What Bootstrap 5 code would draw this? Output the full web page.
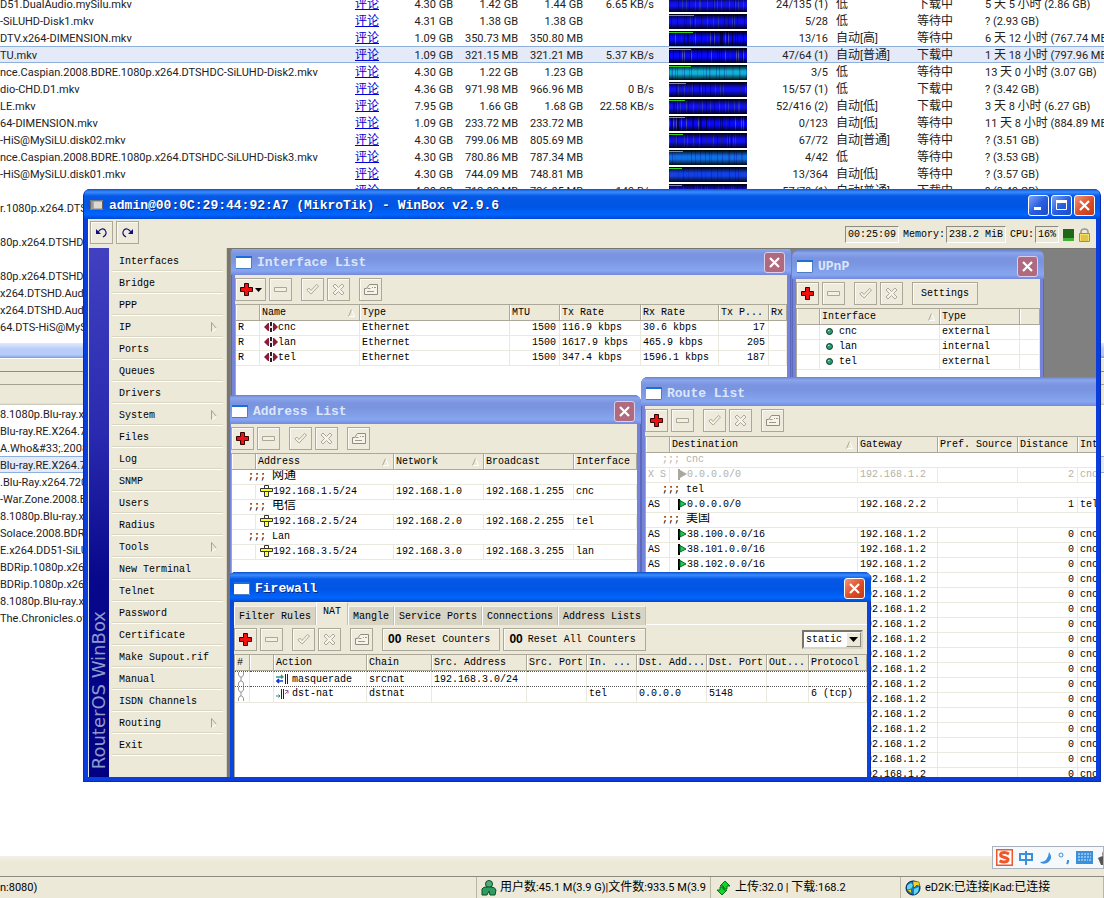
<!DOCTYPE html>
<html lang="zh-CN">
<head>
<meta charset="utf-8">
<meta name="viewport" content="width=device-width, initial-scale=1">
<title>WinBox</title>
<link href="https://cdn.jsdelivr.net/npm/bootstrap@5.3.0/dist/css/bootstrap.min.css" rel="stylesheet">
<style>
:root { --face: #ece9d8; --line: #aca899; --grid: #ebe9de; }
body { font-family: Roboto, "Noto Sans CJK SC", sans-serif; font-size: 11px; line-height: 17px; color: #000; background: #fff; overflow: hidden; }
table { border-collapse: separate; border-spacing: 0; table-layout: fixed; width: 100%; }
td, th { white-space: nowrap; overflow: hidden; padding: 0; }
.cjk { font-size: 12px; }
/* download manager behind */
.transfers { height: 343px; flex: none; margin-top: -5px; }
.transfers td { height: 17px; padding: 2px 4px 0; line-height: 15px; color: #222; }
.transfers td:first-child { padding-left: 0; }
.transfers .cjk { line-height: 0; }
.transfers a { color: #0000d8; font-size: 12px; line-height: 0; }
.transfers .chosen td, .queue .chosen { background: #e4eaf8; box-shadow: inset 0 1px #8fb0dc, inset 0 -1px #8fb0dc; }
.pieces { display: block; width: 78px; height: 15px; margin-left: 7px; }
.splitter { height: 15px; background: linear-gradient(#dfeaff, #b9cdf8 40%, #b4caf8 80%, #7d9bd8); }
.strip { height: 47px; background: linear-gradient(#fff 1px, var(--face) 1px 13px, #8f8c80 13px 14px, var(--face) 14px 26px, #a5a294 26px 27px, var(--face) 27px 45px, #c5c2b4); }
.queue > div { height: 17px; padding-top: 2px; line-height: 15px; white-space: nowrap; color: #222; }
.dock { height: 21px; background: linear-gradient(#f2f0e4, var(--face) 6px); border-bottom: 1px solid #8d8b80; }
.statusbar { height: 21px; background: var(--face); }
.statusbar > div { box-shadow: inset -1px 0 #b9b6a5; padding-left: 4px; white-space: nowrap; overflow: hidden; gap: 3px; }
.ime { right: 0; bottom: 29px; width: 112px; height: 23px; border: 1px solid #a9b3bd; background: #f6f9fc; padding-left: 3px; gap: 5px; overflow: hidden; }
/* shared WinBox look */
.winbox, .winbox button, .winbox select { font-family: "Liberation Mono", "Noto Sans CJK SC", monospace; font-size: 10px; line-height: 15px; color: #000; }
.winbox { left: 83px; right: 3px; top: 189px; bottom: 116px; background: #0a3ddb; padding: 0 4px 4px; border-radius: 7px 7px 0 0; overflow: hidden; border: 1px solid #0a2cb4; border-top: 0; }
.bar-title { background: linear-gradient(#0a4fc8, #3a8cff 3px, #0658e6 7px, #0055e5 60%, #0066ff 85%, #0048d0); color: #fff; font-size: 13px; font-weight: bold; white-space: nowrap; text-shadow: 1px 1px #0a2a80; }
.winbox > .bar-title { height: 30px; margin: 0 -4px; padding: 2px 5px 0 6px; gap: 6px; }
.winbox .cap { width: 21px; height: 21px; padding: 0; border: 1px solid #fff; border-radius: 3px; background: linear-gradient(135deg, #7fa4f5, #2a5fe0 50%, #1c4cc8); display: flex; align-items: center; justify-content: center; flex: none; }
.winbox .cap.shut { background: linear-gradient(135deg, #f0957c, #dd4c26 55%, #c23a14); }
.mainbar { height: 29px; background: var(--face); padding: 2px 5px 0 1px; border-left: 1px solid #fff; }
.winbox .tool { width: 23px; height: 23px; padding: 0; background: #eeebdc; border: 1px solid #aca899; box-shadow: inset 1px 1px #fbfaf4; display: flex; align-items: center; justify-content: center; flex: none; }
.winbox .tool.wide { width: auto; padding: 0 9px 0 5px; gap: 5px; white-space: nowrap; }
.winbox .tool.plus-menu { width: 31px; }
.sunk { border: 1px solid; border-color: #8d8b80 #fff #fff #8d8b80; height: 17px; padding: 0 2px; }
.brand { width: 20px; background: linear-gradient(#4040c0, #2a2ab0 35%, #08088c 62%, #000080); }
.brand span { writing-mode: vertical-rl; transform: rotate(180deg); color: #8d9bc9; font: 18px/20px "DejaVu Sans", sans-serif; white-space: nowrap; margin-bottom: 8px; }
.menu { width: 118px; background: var(--face); padding-top: 2px; border-right: 1px solid #d5d2c2; }
.menu .list-group-item { height: 22px; border: 0; border-radius: 0; margin: 0 3px; width: auto; padding: 0 6px 0 7px; background: transparent; box-shadow: inset 0 -1px #fff, inset 0 -2px #d8d5c5; }
.desk { background: #808080; border-left: 3px solid #77776f; overflow: hidden; border-top: 1px solid #77776f; }
.child { background: #7584d8; padding: 0 4px; border-radius: 7px 7px 0 0; bottom: 0; overflow: hidden; box-shadow: inset 1px 0 #5a68bd, inset -1px 0 #5a68bd; }
.child .bar-title { height: 29px; margin: 0 -4px; padding: 3px 6px 0 5px; gap: 5px; background: linear-gradient(#6a82d0, #8aa6ec 3px, #7a94e0 8px, #7a94e0 45%, #86a6f0 85%, #7488dd); color: #dbe6fb; text-shadow: none; }
.child .cap { background: #b06a80; border-color: #dccdea; }
.child.front { background: #0a46dc; padding-left: 5px; box-shadow: inset 1px 0 #0a2cb4, inset -1px 0 #0a2cb4; }
.child.front .bar-title { height: 30px; margin-left: -5px; background: linear-gradient(#0a4fc8, #3a8cff 3px, #0658e6 7px, #0055e5 60%, #0066ff 85%, #0048d0); color: #fff; text-shadow: 1px 1px #0a2a80; }
.child.front .cap { border-color: #fff; }
.child.front td svg { margin-right: 3px; }
.tools { height: 29px; background: var(--face); padding-top: 3px; gap: 3px; }
.route .tools { height: 30px; }
.tools .gap-before { margin-left: 6px; }
.counter-mark { font: bold 12px/15px "Liberation Sans", sans-serif; }
.sheet { background: #fff; flex: 1; overflow: hidden; border-left: 1px solid #aca899; }
.sheet th { height: 17px; line-height: 14px; font-weight: normal; background: var(--face); padding: 0 2px; border: solid #aca899; border-width: 1px 1px 1px 0; position: relative; box-shadow: inset 1px 0 #fff; }
.sheet td { height: 15px; line-height: 14px; padding: 0 2px; border-right: 1px solid var(--grid); border-bottom: 1px solid var(--grid); }
.sheet .cjk { line-height: 0; }
.sheet .num { text-align: right; padding-right: 3px; }
.sheet .off { color: #b4b2a8; }
.sheet td.note { padding-left: 16px; border-right: 0; }
.sheet th svg { position: absolute; right: 4px; top: 4px; }
.sheet td svg { vertical-align: middle; }
.sheet .current td { border-top: 1px dotted #555; border-bottom: 1px dotted #555; line-height: 13px; }
.iface { left: 1px; top: -3px; width: 560px; }
.upnp { left: 562px; top: 1px; width: 252px; }
.addr { left: -3px; top: 146px; width: 414px; }
.route { left: 411px; top: 128px; right: -8px; }
.fire { left: -1px; top: 323px; width: 642px; }
.tabs { background: var(--face); height: 23px; box-shadow: inset 0 -1px #fff; }
.winbox .tabs button { height: 19px; border: 0; border-left: 1px solid #fff; border-top: 1px solid #f6f4ea; border-right: 1px solid #c2bfae; background: #d7d4c3; padding: 0 4px; white-space: nowrap; }
.winbox .tabs button.on { height: 23px; background: var(--face); padding: 0 6px 5px; }
.winbox .chooser { width: 61px; height: 19px; padding: 0 2px; border: 2px solid; border-color: #77756a #d8d5c5 #d8d5c5 #77756a; border-radius: 0; background: #fff; appearance: none; line-height: 14px; }
.chooser-wrap { height: 19px; margin-top: 2px; }
.chooser-wrap span { right: 2px; top: 2px; width: 15px; height: 15px; background: var(--face); border: 1px solid; border-color: #fff #8d8b80 #8d8b80 #fff; pointer-events: none; }
</style>
</head>
<body class="position-relative vh-100">
<svg class="d-none">
  <symbol id="i-plus" viewBox="0 0 13 13"><path d="M4.500.500h4v4h4v4h-4v4h-4v-4h-4v-4h4z" fill="#f01010" stroke="#300"/></symbol>
  <symbol id="i-minus" viewBox="0 0 13 13"><path d="M.500 4.500h12v4H.500z" fill="#f3f0e2" stroke="#aca899"/></symbol>
  <symbol id="i-check" viewBox="0 0 13 13"><path d="M.800 7l2-2L5 7.500 10.500 1.500l2 1.500L5.200 11z" fill="#f6f4e8" stroke="#aca899"/></symbol>
  <symbol id="i-cross" viewBox="0 0 13 13"><path d="M1 3l2-2 3.500 3.500L10 1l2 2-3.500 3.500L12 10l-2 2-3.500-3.500L3 12l-2-2 3.500-3.500z" fill="#f6f4e8" stroke="#aca899"/></symbol>
  <symbol id="i-card" viewBox="0 0 14 13"><path d="M.500 5.500h2l3-4h8v10H.500z" fill="#f6f4e8" stroke="#8f8c80"/><path d="M3.500 5.500h3M3 8.500h7M8 4.500h1M10 4.500h2" fill="none" stroke="#9c998c"/></symbol>
  <symbol id="i-sort" viewBox="0 0 7 8"><path d="M.500 7.500h6L3.500.500" fill="none" stroke="#fff"/><path d="M.500 7.500L3.500.500" stroke="#aca899"/></symbol>
  <symbol id="i-eth" viewBox="0 0 14 10"><path d="M0 5l4-4h1v8H4zM14 5l-4-4H9v8h1z" fill="#8a1c38"/><path d="M7 0v4M7 6v4" stroke="#222" stroke-width="2"/><path d="M5 5h4" stroke="#d8c8cc"/></symbol>
  <symbol id="i-addr" viewBox="0 0 13 12"><path d="M4.500 6.500h4v5h-4z" fill="#ffff40" stroke="#333"/><path d="M4.500 3.500V.500h4v3" fill="#fff" stroke="#333"/><path d="M.500 3.500h12v3H.500z" fill="#ffff20" stroke="#333"/></symbol>
  <symbol id="i-flag" viewBox="0 0 9 11"><path d="M1 0v11" stroke="#000" stroke-width="2"/><path d="M2 1.500L8 5 2 8z" fill="#20d040" stroke="#063"/></symbol>
  <symbol id="i-flagoff" viewBox="0 0 9 11"><path d="M1 0v11" stroke="#aaa89c" stroke-width="2"/><path d="M2 1L9 5 2 9z" fill="#aaa89c"/></symbol>
  <symbol id="i-dot" viewBox="0 0 7 7"><circle cx="3.500" cy="3.500" r="3" fill="#2f9c72" stroke="#063a28"/><path d="M2 2.500h1.500" stroke="#b8f0d8"/></symbol>
  <symbol id="i-masq" viewBox="0 0 13 12"><path d="M0 4h7M5 2l2 2-2 1.500" stroke="#2c9c84" fill="none" stroke-width="1.300"/><path d="M7 8H1M3 6L1 8l2 2" stroke="#1038d0" fill="none" stroke-width="1.600"/><path d="M9.500 1v10M11.500 1v10" stroke="#222"/></symbol>
  <symbol id="i-dst" viewBox="0 0 13 12"><path d="M0 8h4M2.500 6.500L4 8 2.500 9.500" stroke="#2c8c74" fill="none"/><path d="M5.500 1v10M7.500 1v10" stroke="#222"/><path d="M9 6l3-3M9 2.500h3v3" stroke="#9060a0" fill="none"/></symbol>
  <symbol id="i-chain" viewBox="0 0 8 14"><path d="M1.500 0v3L3 5h2l1.500-2V0M1.500 14v-3L3 9h2l1.500 2v3M4 5v4" fill="none" stroke="#999"/></symbol>
  <symbol id="i-win" viewBox="0 0 16 13"><path d="M0 0h16v13H0z" fill="#fff"/><path d="M0 0h16v2H0z" fill="#1a70d8"/><path d="M15.500 2v10.500H0" fill="none" stroke="#4c7cc4"/></symbol>
  <symbol id="i-x" viewBox="0 0 11 11"><path d="M1 1l9 9M10 1l-9 9" stroke="#fff" stroke-width="2.200"/></symbol>
  <symbol id="i-sub" viewBox="0 0 6 10"><path d="M.500 9.500V.500l5 6" fill="none" stroke="#a5a294"/><path d="M1 9.500l4.500-3" stroke="#fff"/></symbol>
</svg>

<main class="d-flex flex-column h-100 overflow-hidden">
  <div class="transfers overflow-hidden">
    <table>
      <colgroup><col style="width:343px"><col style="width:40px"><col style="width:74px"><col style="width:65px"><col style="width:65px"><col style="width:71px"><col style="width:99px"><col style="width:75px"><col style="width:81px"><col style="width:68px"><col></colgroup>
      <tbody id="transfers"></tbody>
    </table>
  </div>
  <div style="height:5px"></div>
  <div class="splitter flex-shrink-0"></div>
  <div class="strip flex-shrink-0"></div>
  <div class="queue flex-grow-1 overflow-hidden">
    <div>8.1080p.Blu-ray.x264</div><div>Blu-ray.RE.X264.720p</div><div>A.Who&amp;#33;.2008.BD</div><div class="chosen">Blu-ray.RE.X264.720p</div><div>.Blu-Ray.x264.720p</div><div>-War.Zone.2008.BD</div><div>8.1080p.Blu-ray.x264</div><div>Solace.2008.BDRip</div><div>E.x264.DD51-SiLUHD</div><div>BDRip.1080p.x264</div><div>BDRip.1080p.x264</div><div>8.1080p.Blu-ray.x264</div><div>The.Chronicles.of.Narnia</div>
  </div>
  <div class="dock flex-shrink-0"></div>
  <footer class="statusbar d-flex flex-shrink-0">
    <div style="width:477px" class="d-flex align-items-center ps-0">n:8080)</div>
    <div style="width:234px" class="d-flex align-items-center">
      <svg class="flex-shrink-0" width="16" height="16" viewBox="0 0 16 16"><circle cx="8" cy="4" r="3.500" fill="#4fae78" stroke="#0c4a2a"/><path d="M1 9q1-2 4-2h5q4 0 5 3l-1 5H9l-1-4-2 4H1z" fill="#2f9c60" stroke="#0c4a2a"/></svg>
      <span><span class="cjk">用户数</span>:45.1 M(3.9 G)|<span class="cjk">文件数</span>:933.5 M(3.9</span></div>
    <div style="width:190px" class="d-flex align-items-center">
      <svg class="flex-shrink-0" width="17" height="16" viewBox="0 0 17 16"><path d="M10 1l5 5h-3v3H8V6H5zM7 15l-5-5h3V7h4v3h3z" fill="#10d828" stroke="#087018"/></svg>
      <span><span class="cjk">上传</span>:32.0 | <span class="cjk">下载</span>:168.2</span></div>
    <div class="d-flex align-items-center flex-grow-1">
      <svg class="flex-shrink-0" width="17" height="16" viewBox="0 0 17 16"><circle cx="8" cy="8" r="7" fill="#1878c0" stroke="#031c40"/><path d="M2 6q4-5 6-1l-2 4-4 1zM9 9l5-2-1 5-4 3z" fill="#60d8f0"/><path d="M8 1l6 1 1 5-3-2-3 3-1-4zM2 10l4-1 1 5z" fill="#f0d820" stroke="#222" stroke-width=".500"/></svg>
      <span>eD2K:<span class="cjk">已连接</span>|Kad:<span class="cjk">已连接</span></span></div>
  </footer>
</main>

<aside class="ime position-absolute d-flex align-items-center">
  <svg class="flex-shrink-0" width="17" height="17" viewBox="0 0 17 17"><path d="M0 0h17v17H0z" fill="#f0562a"/><path d="M1.500 1.500h14v14h-14z" fill="#fff"/><path d="M13 5Q9 2.500 5.500 4 2.500 7 8 8.300q6 1.200 3 4-3 1.500-7.500-.500" fill="none" stroke="#f0562a" stroke-width="3"/></svg>
  <svg class="flex-shrink-0" width="16" height="16" viewBox="0 0 16 16"><path d="M2 4h12v6H2zM8 1v14" fill="none" stroke="#3a90dc" stroke-width="2"/></svg>
  <svg class="flex-shrink-0" width="14" height="14" viewBox="0 0 14 14"><path d="M10 1q5 7-2 11-5 2-7-1 8 0 9-10z" fill="#3a90dc"/></svg>
  <svg class="flex-shrink-0" width="13" height="14" viewBox="0 0 13 14"><circle cx="3" cy="4" r="2" fill="none" stroke="#3a90dc"/><path d="M10 9v2l-1 2" fill="none" stroke="#3a90dc" stroke-width="2"/></svg>
  <svg class="flex-shrink-0" width="17" height="15" viewBox="0 0 17 15"><path d="M0 1h17v13H0z" fill="#3a90dc"/><path d="M2 4h13M2 7h13M2 10h2M5 10h7M13 10h2" stroke="#dcecfa" stroke-dasharray="2 1"/></svg>
  <svg class="flex-shrink-0" width="14" height="16" viewBox="0 0 14 16"><circle cx="7" cy="4" r="3" fill="#888"/><path d="M0 8q6-4 12 0v4l-2 3H3z" fill="#555"/></svg>
</aside>

<section class="winbox position-absolute d-flex flex-column">
  <header class="bar-title d-flex align-items-center">
    <svg width="13" height="10" viewBox="0 0 14 10"><path d="M0 0h14v10H0z" fill="#dcdad0"/><path d="M.500.500h13v9H.500z" fill="none" stroke="#555"/><path d="M1 1h3v8H1z" fill="#999"/></svg>
    <span>admin@00:0C:29:44:92:A7 (MikroTik) - WinBox v2.9.6</span>
    <div class="ms-auto d-flex" style="gap:2px">
      <button class="cap" aria-label="Minimize"><svg width="11" height="11"><path d="M1 7h7v3H1z" fill="#fff"/></svg></button>
      <button class="cap" aria-label="Maximize"><svg width="11" height="11"><path d="M.500 1.500h10v8H.500z" fill="none" stroke="#fff"/><path d="M0 0h11v3H0z" fill="#fff"/></svg></button>
      <button class="cap shut" aria-label="Close"><svg width="11" height="11"><use href="#i-x"/></svg></button>
    </div>
  </header>
  <div class="mainbar d-flex">
    <button class="tool" aria-label="Undo"><svg width="13" height="12" viewBox="0 0 13 12"><path d="M3 5q4-5 7-2 3 4-2 7" fill="none" stroke="#10107c" stroke-width="1.200"/><path d="M1 2v5h5z" fill="#10107c"/></svg></button>
    <button class="tool" style="margin-left:3px" aria-label="Redo"><svg width="13" height="12" viewBox="0 0 13 12"><path d="M10 5Q6 0 3 3q-3 4 2 7" fill="none" stroke="#10107c" stroke-width="1.200"/><path d="M12 2v5H7z" fill="#10107c"/></svg></button>
    <div class="ms-auto d-flex align-items-center" style="gap:4px">
      <span class="sunk">00:25:09</span><span>Memory:</span><span class="sunk" style="margin-left:-3px">238.2 MiB</span><span>CPU:</span><span class="sunk" style="margin-left:-3px">16%</span>
      <svg width="11" height="12"><path d="M0 0h11v9H0z" fill="#206818"/><path d="M0 9h11v3H0z" fill="#40b038"/></svg>
      <svg width="13" height="14" viewBox="0 0 13 14"><path d="M3 6V4q0-3 3.500-3T10 4v2" fill="none" stroke="#999" stroke-width="1.500"/><path d="M1.500 5.500h10v8h-10z" fill="#f8e060" stroke="#a89038"/><path d="M3 8h7M3 10h7M3 12h7" stroke="#c8a840"/></svg>
    </div>
  </div>
  <div class="d-flex flex-grow-1 overflow-hidden" style="border-left:1px solid #dfe6f5">
    <div class="brand d-flex align-items-end flex-shrink-0"><span>RouterOS WinBox</span></div>
    <nav class="menu list-group rounded-0 flex-shrink-0" id="menu"></nav>
    <div class="desk position-relative flex-grow-1">

      <section class="child upnp position-absolute d-flex flex-column">
        <div class="bar-title d-flex align-items-center"><svg width="16" height="13"><use href="#i-win"/></svg><span>UPnP</span><button class="cap ms-auto" aria-label="Close"><svg width="11" height="11"><use href="#i-x"/></svg></button></div>
        <div class="tools d-flex" data-tools="nocard"><button class="tool wide gap-before order-last px-2">Settings</button></div>
        <div class="sheet"><table><colgroup><col style="width:23px"><col style="width:120px"><col style="width:80px"><col></colgroup>
          <thead><tr><th></th><th>Interface<svg width="7" height="8"><use href="#i-sort"/></svg></th><th>Type</th><th></th></tr></thead>
          <tbody id="upnp"></tbody></table></div>
      </section>

      <section class="child iface position-absolute d-flex flex-column">
        <div class="bar-title d-flex align-items-center"><svg width="16" height="13"><use href="#i-win"/></svg><span>Interface List</span><button class="cap ms-auto" aria-label="Close"><svg width="11" height="11"><use href="#i-x"/></svg></button></div>
        <div class="tools d-flex" data-tools="menu"></div>
        <div class="sheet"><table><colgroup><col style="width:24px"><col style="width:100px"><col style="width:150px"><col style="width:50px"><col style="width:81px"><col style="width:78px"><col style="width:50px"><col></colgroup>
          <thead><tr><th></th><th>Name<svg width="7" height="8"><use href="#i-sort"/></svg></th><th>Type</th><th>MTU</th><th>Tx Rate</th><th>Rx Rate</th><th>Tx P...</th><th>Rx</th></tr></thead>
          <tbody id="iface"></tbody></table></div>
      </section>

      <section class="child addr position-absolute d-flex flex-column">
        <div class="bar-title d-flex align-items-center"><svg width="16" height="13"><use href="#i-win"/></svg><span>Address List</span><button class="cap ms-auto" aria-label="Close"><svg width="11" height="11"><use href="#i-x"/></svg></button></div>
        <div class="tools d-flex" data-tools="full"></div>
        <div class="sheet"><table><colgroup><col style="width:24px"><col style="width:138px"><col style="width:90px"><col style="width:90px"><col></colgroup>
          <thead><tr><th></th><th>Address<svg width="7" height="8"><use href="#i-sort"/></svg></th><th>Network<svg width="7" height="8"><use href="#i-sort"/></svg></th><th>Broadcast</th><th>Interface</th></tr></thead>
          <tbody id="addr"></tbody></table></div>
      </section>

      <section class="child route position-absolute d-flex flex-column">
        <div class="bar-title d-flex align-items-center"><svg width="16" height="13"><use href="#i-win"/></svg><span>Route List</span></div>
        <div class="tools d-flex" data-tools="full"></div>
        <div class="sheet"><table><colgroup><col style="width:24px"><col style="width:188px"><col style="width:80px"><col style="width:80px"><col style="width:60px"><col></colgroup>
          <thead><tr><th></th><th>Destination<svg width="7" height="8"><use href="#i-sort"/></svg></th><th>Gateway</th><th>Pref. Source</th><th>Distance</th><th>Interface</th></tr></thead>
          <tbody id="route"></tbody></table></div>
      </section>

      <section class="child front fire position-absolute d-flex flex-column">
        <div class="bar-title d-flex align-items-center"><svg width="16" height="13"><use href="#i-win"/></svg><span>Firewall</span><button class="cap shut ms-auto" aria-label="Close"><svg width="11" height="11"><use href="#i-x"/></svg></button></div>
        <div class="tabs d-flex align-items-end"><button>Filter Rules</button><button class="on">NAT</button><button>Mangle</button><button>Service Ports</button><button>Connections</button><button>Address Lists</button></div>
        <div class="tools d-flex pe-1" data-tools="full"><div class="d-flex order-last flex-grow-1 gap-before" style="gap:3px"><button class="tool wide"><b class="counter-mark">00</b>Reset Counters</button><button class="tool wide"><b class="counter-mark">00</b>Reset All Counters</button>
          <div class="chooser-wrap position-relative ms-auto"><select class="chooser" aria-label="Filter"><option>static</option></select><span class="position-absolute d-flex align-items-center justify-content-center"><svg width="9" height="5"><path d="M0 0h9L4.500 5z"/></svg></span></div></div></div>
        <div class="sheet"><table><colgroup><col style="width:15px"><col style="width:24px"><col style="width:93px"><col style="width:65px"><col style="width:95px"><col style="width:60px"><col style="width:50px"><col style="width:70px"><col style="width:60px"><col style="width:42px"><col></colgroup>
          <thead><tr><th>#</th><th></th><th>Action</th><th>Chain</th><th>Src. Address</th><th>Src. Port</th><th>In. ...</th><th>Dst. Add...</th><th>Dst. Port</th><th>Out...</th><th>Protocol</th></tr></thead>
          <tbody id="nat"></tbody></table></div>
      </section>
    </div>
  </div>
</section>

<script src="https://cdn.jsdelivr.net/npm/bootstrap@5.3.0/dist/js/bootstrap.bundle.min.js"></script>
<script>
const el = id => document.getElementById(id);
const icon = (name, w, h) => `<svg width="${w}" height="${h}"><use href="#i-${name}"/></svg>`;
const cjk = s => s.replace(/[\u4e00-\u9fff]+/g, m => `<span class="cjk">${m}</span>`);

// Piece map of one download: base hue, stripe tints, finished share
function pieces(seed, tone, done) {
  const base = { blue: '#1010f0', teal: '#10b0d8', azure: '#1070e8', navy: '#1040e8', dark: '#0808ff' }[tone];
  let s = seed * 7919, out = '';
  const rnd = () => (s = (s * 16807 + 11) % 2147483647) / 2147483647;
  const tints = tone === 'dark' ? ['#000', '#777a90', '#000060', '#2020c0'] : ['#202090', '#4050a0', '#0000b0'];
  const alpha = ['teal', 'azure', 'navy'].includes(tone) ? .3 : .6;
  for (let x = 0; x < 78; x += 1 + Math.floor(rnd() * 6))
    out += `<rect x="${x}" width="1" height="15" fill="${tints[Math.floor(rnd() * tints.length)]}" opacity="${alpha}"/>`;
  return `<svg class="pieces" viewBox="0 0 78 15" shape-rendering="crispEdges"><defs><linearGradient id="g${seed}" x2="0" y2="1"><stop offset="0"/><stop offset=".4" stop-opacity="0"/><stop offset=".6" stop-opacity="0"/><stop offset="1" stop-opacity=".9"/></linearGradient></defs><rect width="78" height="15" fill="${base}"/>${out}<rect width="78" height="15" fill="url(#g${seed})"/><rect y="1" width="${done}" height="1" fill="#30d020"/></svg>`;
}
const jobs = [
  ['D51.DualAudio.mySilu.mkv','4.30 GB','1.42 GB','1.44 GB','6.65 KB/s','blue',26,'24/135 (1)','低','下载中','5 天 5 小时 (2.86 GB)'],
  ['-SiLUHD-Disk1.mkv','4.31 GB','1.38 GB','1.38 GB','','blue',25,'5/28','低','等待中','? (2.93 GB)'],
  ['DTV.x264-DIMENSION.mkv','1.09 GB','350.73 MB','350.80 MB','','dark',24,'13/16','自动[高]','等待中','6 天 12 小时 (767.74 MB)'],
  ['TU.mkv','1.09 GB','321.15 MB','321.21 MB','5.37 KB/s','dark',22,'47/64 (1)','自动[普通]','下载中','1 天 18 小时 (797.96 MB)'],
  ['nce.Caspian.2008.BDRE.1080p.x264.DTSHDC-SiLUHD-Disk2.mkv','4.30 GB','1.22 GB','1.23 GB','','teal',22,'3/5','低','等待中','13 天 0 小时 (3.07 GB)'],
  ['dio-CHD.D1.mkv','4.36 GB','971.98 MB','966.96 MB','0 B/s','blue',17,'15/57 (1)','低','下载中','? (3.42 GB)'],
  ['LE.mkv','7.95 GB','1.66 GB','1.68 GB','22.58 KB/s','blue',16,'52/416 (2)','自动[低]','下载中','3 天 8 小时 (6.27 GB)'],
  ['64-DIMENSION.mkv','1.09 GB','233.72 MB','233.72 MB','','dark',16,'0/123','自动[低]','等待中','11 天 8 小时 (884.89 MB)'],
  ['-HiS@MySiLU.disk02.mkv','4.30 GB','799.06 MB','805.69 MB','','blue',14,'67/72','自动[普通]','等待中','? (3.51 GB)'],
  ['nce.Caspian.2008.BDRE.1080p.x264.DTSHDC-SiLUHD-Disk3.mkv','4.30 GB','780.86 MB','787.34 MB','','azure',14,'4/42','低','等待中','? (3.53 GB)'],
  ['-HiS@MySiLU.disk01.mkv','4.30 GB','744.09 MB','748.81 MB','','navy',13,'13/364','自动[低]','等待中','? (3.57 GB)'],
  ['','4.30 GB','713.03 MB','736.05 MB','149 B/s','blue',13,'57/79 (1)','自动[普通]','下载中','? (3.49 GB)']
];
el('transfers').innerHTML = jobs.map((j, i) => `<tr class="${i === 3 ? 'chosen' : ''}"><td>${j[0]}</td><td class="text-end"><a href="#">评论</a></td>${j.slice(1, 5).map(v => `<td class="text-end">${v}</td>`).join('')}<td>${pieces(i + 1, j[5], j[6])}</td><td class="text-end">${j[7]}</td><td>${cjk(j[8])}</td><td>${cjk(j[9])}</td><td>${cjk(j[10])}</td></tr>`).join('')
  + ['r.1080p.x264.DTSHD','','80p.x264.DTSHD.Audio','','80p.x264.DTSHD.Audio','x264.DTSHD.Audio','x264.DTSHD.Audio','64.DTS-HiS@MySiLU'].map(n => `<tr><td>${n}</td><td colspan="10"></td></tr>`).join('');

el('menu').innerHTML = ['Interfaces','Bridge','PPP','IP>','Ports','Queues','Drivers','System>','Files','Log','SNMP','Users','Radius','Tools>','New Terminal','Telnet','Password','Certificate','Make Supout.rif','Manual','ISDN Channels','Routing>','Exit']
  .map(t => `<button class="list-group-item list-group-item-action d-flex align-items-center justify-content-between"><span>${t.replace('>', '')}</span>${t.endsWith('>') ? icon('sub', 6, 10) : ''}</button>`).join('');

document.querySelectorAll('[data-tools]').forEach(bar => {
  const kind = bar.dataset.tools;
  const b = (label, pic, cls = '') => `<button class="tool ${cls}" aria-label="${label}">${pic}</button>`;
  bar.insertAdjacentHTML('afterbegin',
    b('Add', icon('plus', 13, 13) + (kind === 'menu' ? '<svg width="7" height="4" style="margin-left:2px"><path d="M0 0h7L3.500 4z"/></svg>' : ''), kind === 'menu' ? 'plus-menu' : '')
    + b('Remove', icon('minus', 13, 13)) + b('Enable', icon('check', 13, 13), 'gap-before') + b('Disable', icon('cross', 13, 13))
    + (kind === 'nocard' ? '' : b('Comment', icon('card', 14, 13), 'gap-before')));
});

el('iface').innerHTML = [['cnc','116.9 kbps','30.6 kbps','17'],['lan','1617.9 kbps','465.9 kbps','205'],['tel','347.4 kbps','1596.1 kbps','187']]
  .map(r => `<tr><td>R</td><td class="ps-1">${icon('eth', 14, 10)}${r[0]}</td><td>Ethernet</td><td class="num">1500</td><td>${r[1]}</td><td>${r[2]}</td><td class="num">${r[3]}</td><td></td></tr>`).join('');
el('upnp').innerHTML = [['cnc','external'],['lan','internal'],['tel','external']]
  .map(r => `<tr><td></td><td style="padding-left:6px">${icon('dot', 7, 7)} ${r[0]}</td><td>${r[1]}</td><td></td></tr>`).join('');
const note = (text, span, off = '') => `<tr class="${off}"><td class="note" colspan="${span}">;;; ${cjk(text)}</td></tr>`;
el('addr').innerHTML = [['网通',1,'cnc'],['电信',2,'tel'],['Lan',3,'lan']]
  .map(r => note(r[0], 5) + `<tr><td></td><td class="ps-1">${icon('addr', 13, 12)}192.168.${r[1]}.5/24</td><td>192.168.${r[1]}.0</td><td>192.168.${r[1]}.255</td><td>${r[2]}</td></tr>`).join('');
const hop = (flags, dst, gw, dist, via, off = '') => `<tr class="${off}"><td>${flags}</td><td class="ps-2">${icon(off ? 'flagoff' : 'flag', 9, 11)}${dst}</td><td>${gw}</td><td></td><td class="num">${dist}</td><td>${via}</td></tr>`;
let hops = note('cnc', 6, 'off') + hop('X S', '0.0.0.0/0', '192.168.1.2', 2, 'cnc', 'off') + note('tel', 6) + hop('AS', '0.0.0.0/0', '192.168.2.2', 1, 'tel') + note('美国', 6);
for (let n = 100; n < 117; n++) hops += hop('AS', `38.${n}.0.0/16`, '192.168.1.2', 0, 'cnc');
el('route').innerHTML = hops;
el('nat').innerHTML = [['current', icon('masq', 13, 12) + 'masquerade', 'srcnat', '192.168.3.0/24', '', '', '', '', '', ''], ['', icon('dst', 13, 12) + 'dst-nat', 'dstnat', '', '', 'tel', '0.0.0.0', '5148', '', '6 (tcp)']]
  .map(r => `<tr class="${r[0]}"><td>${icon('chain', 8, 14)}</td><td></td>${r.slice(1).map(v => `<td>${v}</td>`).join('')}</tr>`).join('');
</script>
</body>
</html>
